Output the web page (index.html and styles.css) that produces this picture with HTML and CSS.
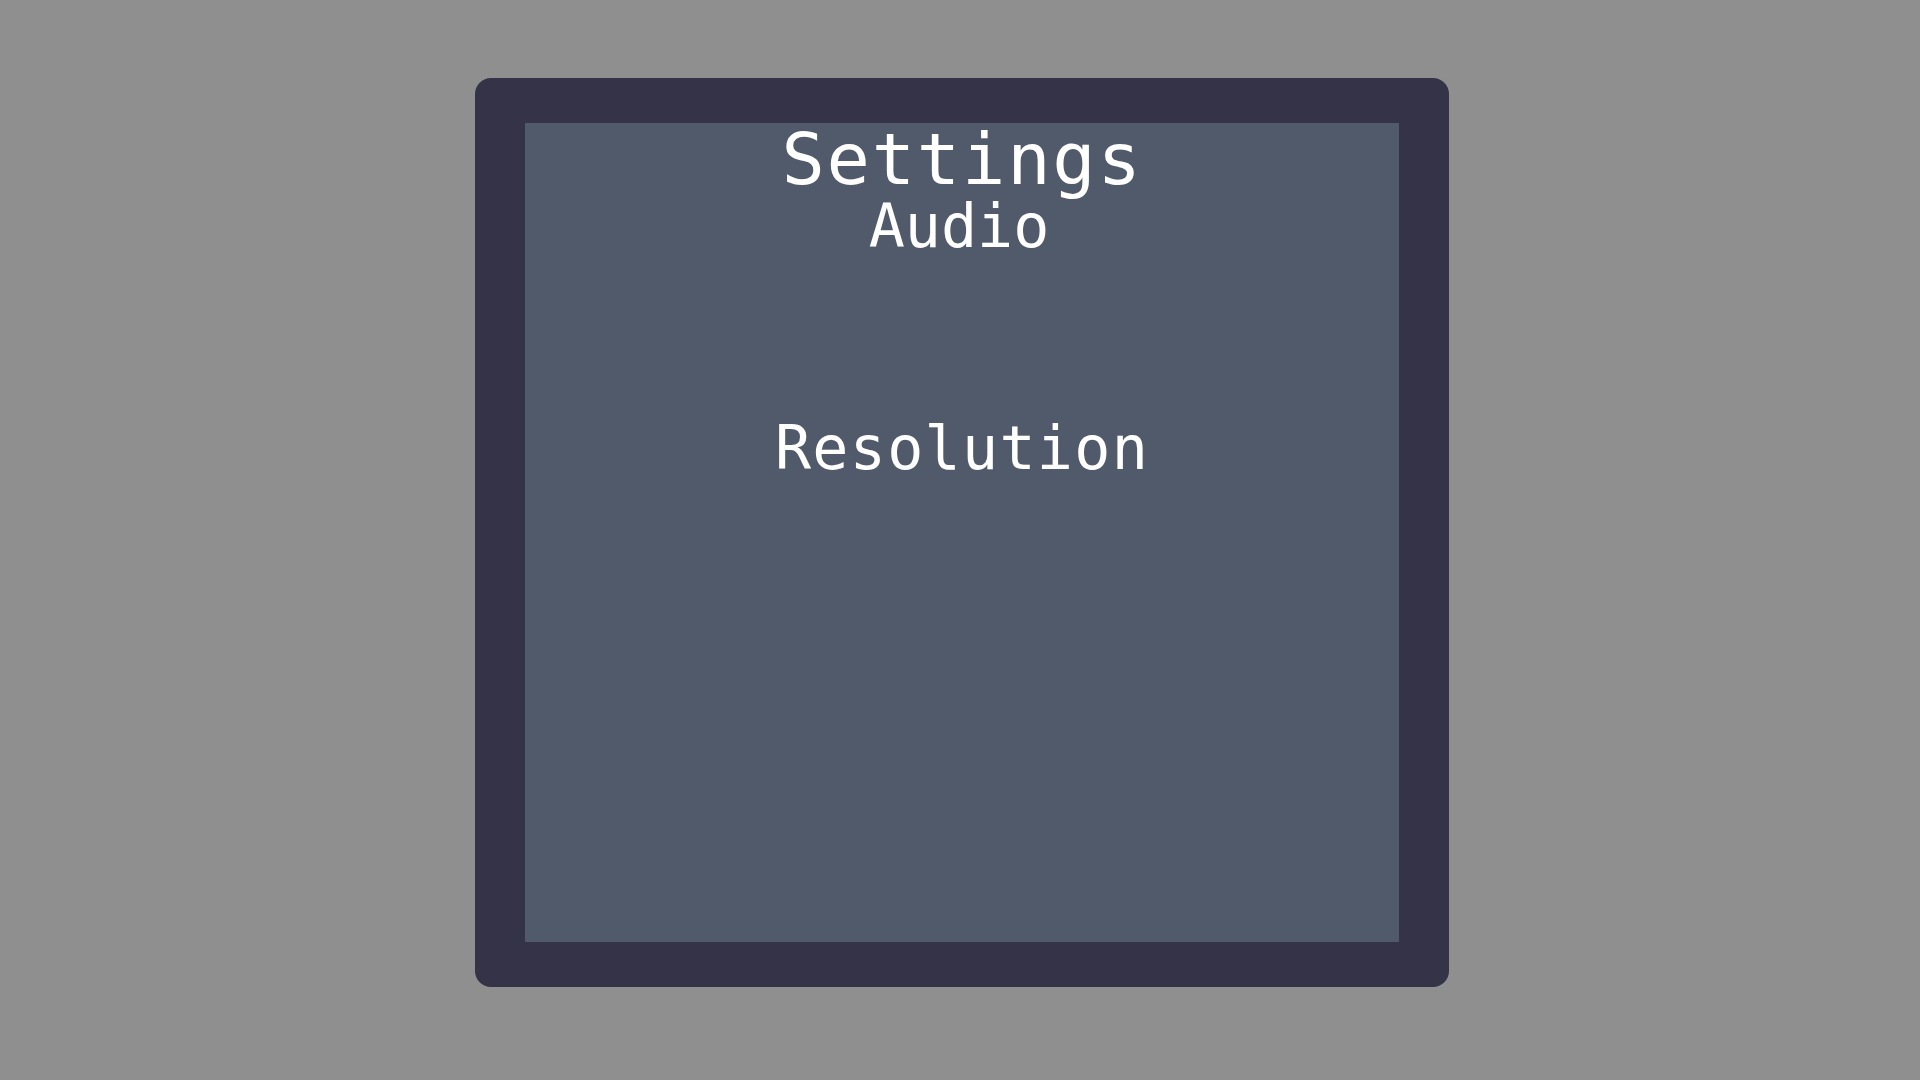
FILE: index.html
```html
<!DOCTYPE html>
<html lang="en">
<head>
<meta charset="utf-8">
<title>Settings</title>
<link rel="stylesheet" href="styles.css">
</head>
<body>
<div class="frame">
  <div class="panel">
    <h1 class="title">Settings</h1>
    <div class="tab">Audio</div>
    <div class="option">Resolution</div>
  </div>
</div>
</body>
</html>
```
FILE: styles.css
```css
html, body {
  margin: 0;
  padding: 0;
}
body {
  width: 1920px;
  height: 1080px;
  background: #8f8f8f;
  display: flex;
  justify-content: center;
  align-items: flex-start;
  font-family: "DejaVu Sans Mono", "Liberation Mono", monospace;
  color: #ffffff;
  overflow: hidden;
}
.frame {
  margin-top: 78px;
  margin-left: 4px;
  width: 974px;
  height: 909px;
  box-sizing: border-box;
  padding: 45px 50px;
  background: #353347;
  border-radius: 16px;
}
.panel {
  width: 100%;
  height: 100%;
  background: #515a6a;
  display: flex;
  flex-direction: column;
  align-items: center;
}
.title {
  margin: 0;
  font-size: 72px;
  font-weight: normal;
  line-height: 1;
  letter-spacing: 1.8px;
}
.tab {
  margin-top: 1px;
  margin-right: 6px;
  font-size: 60px;
  line-height: 1;
}
.option {
  margin-top: 162px;
  font-size: 60px;
  line-height: 1;
  letter-spacing: 1.3px;
}
```
